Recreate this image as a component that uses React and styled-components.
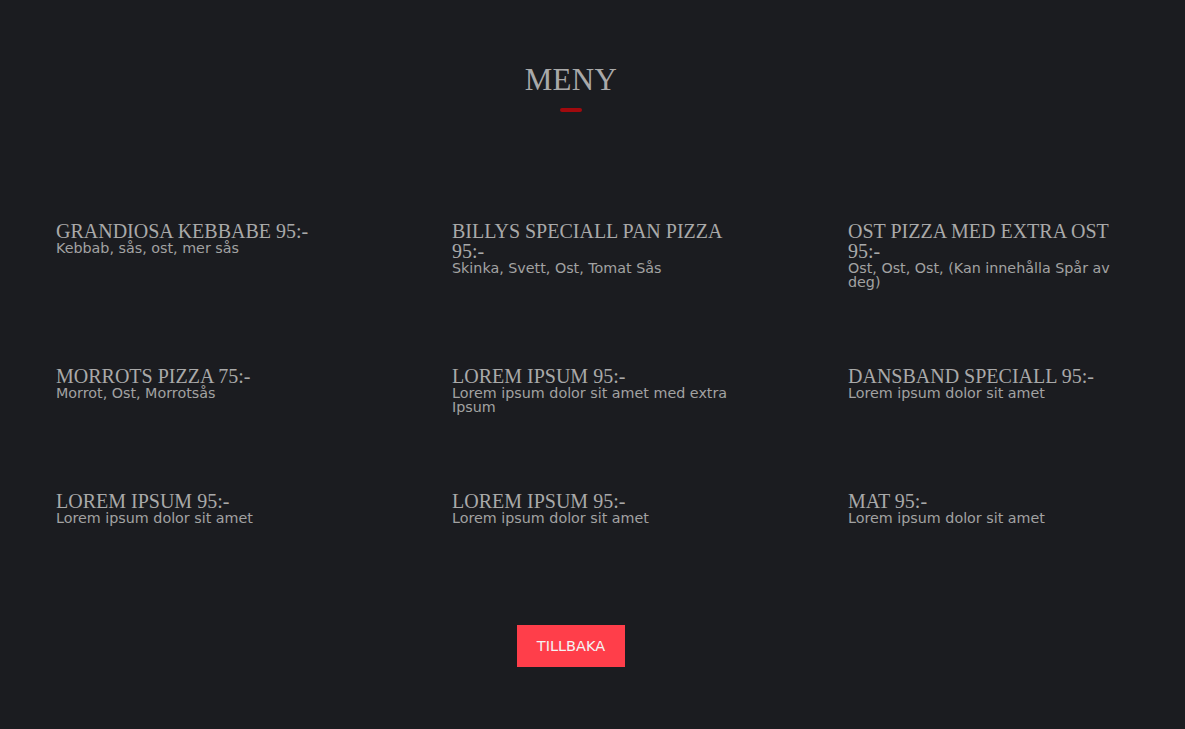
import styled, { createGlobalStyle } from 'styled-components';

const GlobalStyle = createGlobalStyle`
  html, body {
    margin: 0;
    padding: 0;
    background: #1b1c20;
  }
  body {
    font-family: "DejaVu Sans", Verdana, sans-serif;
    color: #a4a4a4;
  }
`;

const menuItems = [
  { title: 'GRANDIOSA KEBBABE 95:-', desc: 'Kebbab, sås, ost, mer sås' },
  { title: 'BILLYS SPECIALL PAN PIZZA 95:-', desc: 'Skinka, Svett, Ost, Tomat Sås' },
  { title: 'OST PIZZA MED EXTRA OST 95:-', desc: 'Ost, Ost, Ost, (Kan innehålla Spår av deg)' },
  { title: 'MORROTS PIZZA 75:-', desc: 'Morrot, Ost, Morrotsås' },
  { title: 'LOREM IPSUM 95:-', desc: 'Lorem ipsum dolor sit amet med extra Ipsum' },
  { title: 'DANSBAND SPECIALL 95:-', desc: 'Lorem ipsum dolor sit amet' },
  { title: 'LOREM IPSUM 95:-', desc: 'Lorem ipsum dolor sit amet' },
  { title: 'LOREM IPSUM 95:-', desc: 'Lorem ipsum dolor sit amet' },
  { title: 'MAT 95:-', desc: 'Lorem ipsum dolor sit amet' },
];

const App = () => {
  return (
    <>
      <GlobalStyle />
      <MenuSection>
        <Header>
          <Title>MENY</Title>
          <Underline />
        </Header>
        <MenuGrid>
          {menuItems.map((item, i) => (
            <MenuItem key={i}>
              <ItemTitle>{item.title}</ItemTitle>
              <ItemDesc>{item.desc}</ItemDesc>
            </MenuItem>
          ))}
        </MenuGrid>
        <ButtonRow>
          <BackButton>TILLBAKA</BackButton>
        </ButtonRow>
      </MenuSection>
    </>
  );
};

const MenuSection = styled.section`
  width: 1185px;
  min-height: 729px;
  padding-top: 62px;
  box-sizing: border-box;
`;

const Header = styled.header`
  width: 1142px;
  display: flex;
  flex-direction: column;
  align-items: center;
`;

const Title = styled.h1`
  margin: 0;
  font-family: "Liberation Serif", Georgia, serif;
  font-weight: 400;
  font-size: 31px;
  line-height: 36px;
  color: #a9a9a9;
  letter-spacing: 0.3px;
`;

const Underline = styled.div`
  width: 22px;
  height: 4px;
  margin-top: 10px;
  border-radius: 2px;
  background: #a10a0e;
`;

const MenuGrid = styled.div`
  display: grid;
  grid-template-columns: repeat(3, 396px);
  row-gap: 77px;
  margin-top: 109px;
`;

const MenuItem = styled.div`
  padding: 0 58px 0 56px;
`;

const ItemTitle = styled.h3`
  margin: 0;
  font-family: "Liberation Serif", Georgia, serif;
  font-weight: 400;
  font-size: 20px;
  line-height: 20px;
  color: #a9a9a9;
`;

const ItemDesc = styled.p`
  margin: 0;
  font-size: 14.3px;
  line-height: 14px;
  color: #a2a2a2;
`;

const ButtonRow = styled.div`
  width: 1142px;
  display: flex;
  justify-content: center;
  margin-top: 100px;
  padding-bottom: 62px;
`;

const BackButton = styled.button`
  width: 108px;
  height: 42px;
  border: none;
  background: #ff3e4a;
  color: #f4f4f4;
  font-family: "DejaVu Sans", Verdana, sans-serif;
  font-size: 14.5px;
  cursor: pointer;
`;

export default App;
